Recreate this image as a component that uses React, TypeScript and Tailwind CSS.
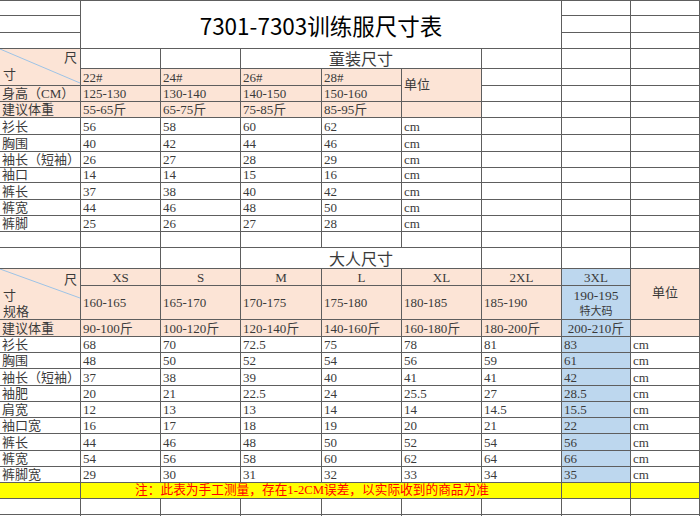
import type { ReactNode } from "react";

const line = "border-r border-b border-[#5e5e5e]";

function C({ className = "", mid = false, children }: { className?: string; mid?: boolean; children?: ReactNode }) {
  return (
    <div
      className={`${line} flex ${mid ? "items-center" : "items-end pb-[1px]"} overflow-hidden whitespace-nowrap px-[2px] leading-[13px] ${className}`}
    >
      {children}
    </div>
  );
}

const kids = [
  ["衫长", "56", "58", "60", "62"],
  ["胸围", "40", "42", "44", "46"],
  ["袖长（短袖）", "26", "27", "28", "29"],
  ["袖口", "14", "14", "15", "16"],
  ["裤长", "37", "38", "40", "42"],
  ["裤宽", "44", "46", "48", "50"],
  ["裤脚", "25", "26", "27", "28"],
];

const adults = [
  ["衫长", "68", "70", "72.5", "75", "78", "81", "83"],
  ["胸围", "48", "50", "52", "54", "56", "59", "61"],
  ["袖长（短袖）", "37", "38", "39", "40", "41", "41", "42"],
  ["袖肥", "20", "21", "22.5", "24", "25.5", "27", "28.5"],
  ["肩宽", "12", "13", "13", "14", "14", "14.5", "15.5"],
  ["袖口宽", "16", "17", "18", "19", "20", "21", "22"],
  ["裤长", "44", "46", "48", "50", "52", "54", "56"],
  ["裤宽", "54", "56", "58", "60", "62", "64", "66"],
  ["裤脚宽", "29", "30", "31", "32", "33", "34", "35"],
];

const empty = (n: number, key: string) =>
  Array.from({ length: n }).map((_, i) => <C key={`${key}-${i}`} />);

export default function App() {
  return (
    <div
      className="w-[700px] h-[516px] overflow-hidden bg-white text-[13px] text-[#3a3a3a]"
      style={{ fontFamily: '"Liberation Serif", "Noto Sans CJK SC", serif' }}
    >
      <div className="grid border-t border-[#5e5e5e] grid-cols-[81px_80px_80px_81px_80px_80px_80px_69px_69px] grid-rows-[15px_17px_16px_20px_17px_16px_16px_17px_17px_16px_15px_17px_16px_16px_16px_21px_17px_34px_17px_16px_16px_17px_16px_16px_16px_17px_16px_16px_16px_16px_16px]">
        {/* title block */}
        <C />
        <div className={`${line} col-span-6 row-span-3 flex items-center justify-center pt-[2px] text-[22.5px] text-black font-['Noto_Sans_CJK_SC',sans-serif]`}>
          7301-7303训练服尺寸表
        </div>
        <C />
        <C />
        <C />
        <C />
        <C />
        <C />
        <C />
        <C />

        {/* kids header */}
        <div className={`${line} row-span-2 relative bg-[#fce4d6]`}>
          <svg className="absolute inset-0 w-full h-full" viewBox="0 0 80 36" preserveAspectRatio="none">
            <line x1="0" y1="0" x2="80" y2="34" stroke="#9dc3e6" strokeWidth="1" />
          </svg>
          <span className="absolute right-[3px] top-[1px] leading-[16px]">尺</span>
          <span className="absolute left-[3px] top-[18px] leading-[16px]">寸</span>
        </div>
        <C />
        <C />
        <div className={`${line} col-span-3 flex items-end justify-center pb-[1px] text-[16px] leading-[18px] font-['Noto_Sans_CJK_SC',sans-serif]`}>
          童装尺寸
        </div>
        <C />
        <C />
        <C />

        <C className="bg-[#fce4d6]">22#</C>
        <C className="bg-[#fce4d6]">24#</C>
        <C className="bg-[#fce4d6]">26#</C>
        <C className="bg-[#fce4d6]">28#</C>
        <div className={`${line} row-span-2 flex items-center px-[2px] bg-[#fce4d6]`}>单位</div>
        <C />
        <C />
        <C />

        <C className="bg-[#fce4d6]">身高（CM）</C>
        <C className="bg-[#fce4d6]">125-130</C>
        <C className="bg-[#fce4d6]">130-140</C>
        <C className="bg-[#fce4d6]">140-150</C>
        <C className="bg-[#fce4d6]">150-160</C>
        <C />
        <C />
        <C />

        <C className="bg-[#fce4d6]">建议体重</C>
        <C className="bg-[#fce4d6]">55-65斤</C>
        <C className="bg-[#fce4d6]">65-75斤</C>
        <C className="bg-[#fce4d6]">75-85斤</C>
        <C className="bg-[#fce4d6]">85-95斤</C>
        <C className="bg-[#fce4d6]" />
        <C />
        <C />
        <C />

        {kids.map((row) => (
          <>
            {row.map((v, i) => (
              <C key={`${row[0]}-${i}`}>{v}</C>
            ))}
            <C>cm</C>
            {empty(3, `k-${row[0]}`)}
          </>
        ))}

        {empty(9, "gap")}

        {/* adult header */}
        <C />
        <C />
        <C />
        <div className={`${line} col-span-3 flex items-end justify-center pb-[1px] text-[16px] leading-[18px] font-['Noto_Sans_CJK_SC',sans-serif]`}>
          大人尺寸
        </div>
        <C />
        <C />
        <C />

        <div className={`${line} row-span-2 relative bg-[#fce4d6]`}>
          <svg className="absolute inset-0 w-full h-full" viewBox="0 0 80 50" preserveAspectRatio="none">
            <line x1="0" y1="0" x2="80" y2="29" stroke="#9dc3e6" strokeWidth="1" />
          </svg>
          <span className="absolute right-[3px] top-[3px] leading-[16px]">尺</span>
          <span className="absolute left-[3px] top-[19px] leading-[16px]">寸</span>
          <span className="absolute left-[3px] top-[35px] leading-[16px]">规格</span>
        </div>
        {["XS", "S", "M", "L", "XL", "2XL"].map((s) => (
          <C key={s} className="bg-[#fce4d6] justify-center">
            {s}
          </C>
        ))}
        <C className="bg-[#bdd7ee] justify-center">3XL</C>
        <div className={`${line} row-span-2 flex items-center justify-center pb-[2px] bg-[#fce4d6]`}>单位</div>

        {["160-165", "165-170", "170-175", "175-180", "180-185", "185-190"].map((s) => (
          <C key={s} mid className="bg-[#fce4d6]">
            {s}
          </C>
        ))}
        <div className={`${line} flex flex-col items-center justify-center gap-[1px] bg-[#bdd7ee]`}>
          <span className="text-[13.5px] leading-[14px]">190-195</span>
          <span className="text-[11px] leading-[12px] font-['Noto_Sans_CJK_SC',sans-serif]">特大码</span>
        </div>

        <C className="bg-[#fce4d6]">建议体重</C>
        {["90-100斤", "100-120斤", "120-140斤", "140-160斤", "160-180斤", "180-200斤"].map((s) => (
          <C key={s} className="bg-[#fce4d6]">
            {s}
          </C>
        ))}
        <C className="bg-[#bdd7ee] justify-center">200-210斤</C>
        <C className="bg-[#fce4d6]" />

        {adults.map((row) => (
          <>
            {row.map((v, i) => (
              <C key={`${row[0]}-a-${i}`} className={i === 7 ? "bg-[#bdd7ee]" : ""}>
                {v}
              </C>
            ))}
            <C>cm</C>
          </>
        ))}

        {/* note row */}
        <C className="bg-[#ffff00]" />
        <div className={`${line} col-span-6 flex items-end justify-center pb-[1px] pr-[18px] leading-[13px] bg-[#ffff00] text-[#ff0000] text-[12.7px]`}>
          注：此表为手工测量，存在1-2CM误差，以实际收到的商品为准
        </div>
        <C className="bg-[#ffff00]" />
        <C className="bg-[#ffff00]" />

        {empty(9, "end1")}
        {empty(9, "end2")}
      </div>
    </div>
  );
}
